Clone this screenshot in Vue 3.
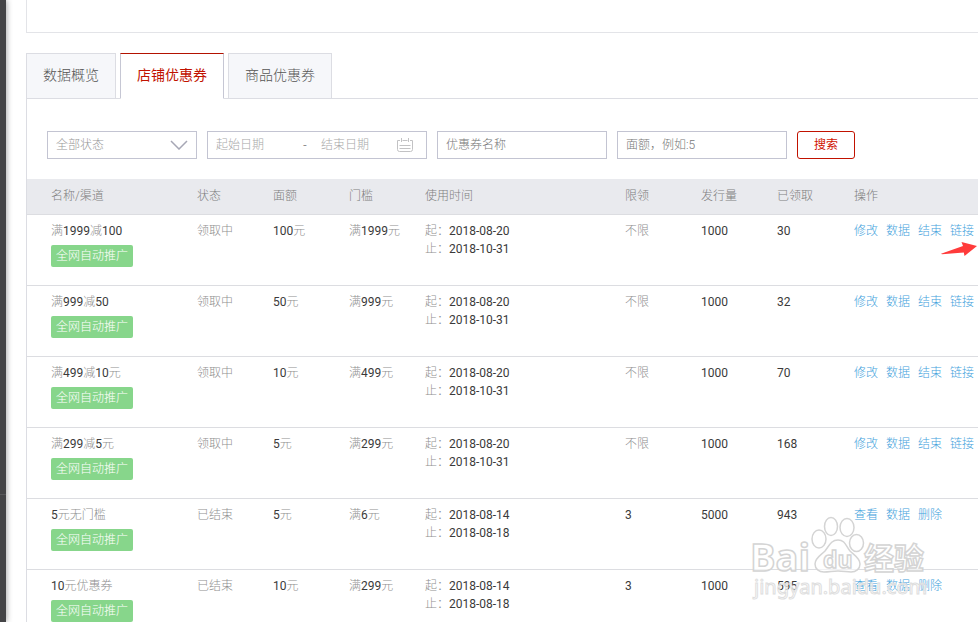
<script setup>
import { ref } from 'vue'

const tabs = ['数据概览', '店铺优惠券', '商品优惠券']
const activeTab = ref('店铺优惠券')

const columns = [
  { key: 'name', label: '名称/渠道' },
  { key: 'state', label: '状态' },
  { key: 'amount', label: '面额' },
  { key: 'threshold', label: '门槛' },
  { key: 'period', label: '使用时间' },
  { key: 'limit', label: '限领' },
  { key: 'issued', label: '发行量' },
  { key: 'taken', label: '已领取' },
  { key: 'actions', label: '操作' },
]

const running = ['修改', '数据', '结束', '链接']
const ended = ['查看', '数据', '删除']

const coupons = [
  { name: '满1999减100', state: '领取中', amount: '100元', threshold: '满1999元', from: '2018-08-20', to: '2018-10-31', limit: '不限', issued: '1000', taken: '30', actions: running },
  { name: '满999减50', state: '领取中', amount: '50元', threshold: '满999元', from: '2018-08-20', to: '2018-10-31', limit: '不限', issued: '1000', taken: '32', actions: running },
  { name: '满499减10元', state: '领取中', amount: '10元', threshold: '满499元', from: '2018-08-20', to: '2018-10-31', limit: '不限', issued: '1000', taken: '70', actions: running },
  { name: '满299减5元', state: '领取中', amount: '5元', threshold: '满299元', from: '2018-08-20', to: '2018-10-31', limit: '不限', issued: '1000', taken: '168', actions: running },
  { name: '5元无门槛', state: '已结束', amount: '5元', threshold: '满6元', from: '2018-08-14', to: '2018-08-18', limit: '3', issued: '5000', taken: '943', actions: ended },
  { name: '10元优惠券', state: '已结束', amount: '10元', threshold: '满299元', from: '2018-08-14', to: '2018-08-18', limit: '3', issued: '1000', taken: '595', actions: ended },
]

// Splits a value into digit runs and Chinese runs, which carry different tones.
const parts = (text) =>
  text.match(/\d+|\D+/g).map((value) => ({ value, digits: /\d/.test(value) }))
</script>

<template>
  <div class="page">
    <aside class="rail"><div class="rail-line"></div></aside>
    <main class="content">
      <section class="summary"></section>

      <nav class="tabs">
        <button
          v-for="tab in tabs"
          :key="tab"
          type="button"
          class="tab"
          :class="{ active: tab === activeTab }"
          @click="activeTab = tab"
        >{{ tab }}</button>
      </nav>

      <section class="panel">
        <form class="filters" @submit.prevent>
          <div class="field state-field">
            <select class="control" aria-label="全部状态">
              <option>全部状态</option>
            </select>
            <svg class="chevron" viewBox="0 0 18 10" width="18" height="10">
              <path d="M1 1l8 8 8-8" fill="none" stroke="#a6a7b5" stroke-width="1.5" />
            </svg>
          </div>
          <div class="field dates">
            <input class="control pale" type="text" placeholder="起始日期" aria-label="起始日期" />
            <span class="dash">-</span>
            <input class="control pale end" type="text" placeholder="结束日期" aria-label="结束日期" />
            <svg class="calendar" viewBox="0 0 16 16" width="16" height="16">
              <path
                d="M3 3.5H.5v9q0 2 2 2h11q2 0 2-2v-9H13M5.500 3.500h5M4.500 1v4M11.500 1v4M2.500 8.500h11M2.500 11.500h11"
                fill="none" stroke="#c2c2c4" stroke-width="1"
              />
            </svg>
          </div>
          <div class="field text-field">
            <input class="control" type="text" placeholder="优惠券名称" aria-label="优惠券名称" />
          </div>
          <div class="field text-field">
            <input class="control" type="text" placeholder="面额，例如:5" aria-label="面额" />
          </div>
          <button type="submit" class="search">搜索</button>
        </form>

        <table class="coupons">
          <colgroup>
            <col v-for="c in columns" :key="c.key" :class="'col-' + c.key" />
          </colgroup>
          <thead>
            <tr>
              <th v-for="c in columns" :key="c.key" scope="col">{{ c.label }}</th>
            </tr>
          </thead>
          <tbody>
            <tr v-for="(row, r) in coupons" :key="r">
              <td>
                <div class="name">
                  <span v-for="(p, i) in parts(row.name)" :key="i" :class="{ digits: p.digits }">{{ p.value }}</span>
                </div>
                <span class="badge">全网自动推广</span>
              </td>
              <td>{{ row.state }}</td>
              <td>
                <span v-for="(p, i) in parts(row.amount)" :key="i" :class="{ digits: p.digits }">{{ p.value }}</span>
              </td>
              <td>
                <span v-for="(p, i) in parts(row.threshold)" :key="i" :class="{ digits: p.digits }">{{ p.value }}</span>
              </td>
              <td>
                <div>起：<span class="digits">{{ row.from }}</span></div>
                <div>止：<span class="digits">{{ row.to }}</span></div>
              </td>
              <td>
                <span v-for="(p, i) in parts(row.limit)" :key="i" :class="{ digits: p.digits }">{{ p.value }}</span>
              </td>
              <td><span class="digits">{{ row.issued }}</span></td>
              <td><span class="digits">{{ row.taken }}</span></td>
              <td>
                <div class="actions">
                  <a v-for="a in row.actions" :key="a" href="#">{{ a }}</a>
                </div>
                <svg v-if="r === 0" class="pointer" viewBox="0 0 36 14" width="36" height="14">
                  <path d="M0 11.700L22 4 20.500 0 36 4 23.500 14 22.800 10.500 1 12.200z" fill="#ff3b3b" />
                </svg>
              </td>
            </tr>
          </tbody>
        </table>
      </section>
    </main>

    <svg class="watermark" viewBox="0 0 180 88" width="180" height="88">
      <g class="mark">
        <ellipse cx="69" cy="25" rx="7" ry="9" />
        <ellipse cx="81" cy="12.500" rx="6.500" ry="9" />
        <ellipse cx="97" cy="13.500" rx="7" ry="9" />
        <ellipse cx="106.500" cy="29" rx="7" ry="8.500" />
        <path d="M88 26c-7 0-9 6-13 11-4 4-10 7-10 13 0 5 4 8 9 8 5 0 9-1 14-1s9 1 13 1c5 0 9-3 9-8 0-6-6-9-10-13-4-5-5-11-12-11z" />
        <text class="latin" x="0" y="57" font-size="38">Bai</text>
        <text class="latin" x="73" y="54" font-size="23">du</text>
        <text class="han" x="114" y="55" font-size="30">经验</text>
        <text class="url" x="4" y="80" font-size="20">jingyan.baidu.com</text>
      </g>
    </svg>
  </div>
</template>

<style>
body {
  margin: 0;
  background: #fff;
}
</style>

<style scoped>
.page {
  position: relative;
  display: flex;
  height: 100vh;
  overflow: hidden;
  font-family: Roboto, "Noto Sans CJK SC", sans-serif;
  font-size: 12px;
  line-height: 18px;
  color: #8f8f8f;
}
.page * {
  box-sizing: border-box;
}
.rail {
  flex: none;
  width: 6px;
  background: #444446;
  box-shadow: 0 0 6px rgba(0, 0, 0, 0.45);
}
.rail-line {
  height: 495px;
  border-bottom: 1px solid #58585a;
}
.content {
  flex: 1;
  min-width: 0;
  padding-left: 20px;
}
.summary {
  height: 33px;
  border-left: 1px solid #e3e4e8;
  border-bottom: 1px solid #e3e4e8;
}
.tabs {
  position: relative;
  display: flex;
  gap: 4px;
  margin-top: 20px;
  margin-bottom: -1px;
}
.tab {
  height: 46px;
  padding: 0 16px 2px;
  border: 1px solid #dcdde3;
  background: #f6f7fa;
  color: #555;
  font: 300 14px/20px Roboto, "Noto Sans CJK SC", sans-serif;
}
.tab.active {
  border-color: #b31200 #c6c7d4 #fff;
  background: #fff;
  color: #c11200;
  font-weight: 400;
}
.panel {
  padding-top: 32px;
  border-top: 1px solid #dcdde3;
  border-left: 1px solid #dcdde3;
}
.filters {
  display: flex;
  gap: 10px;
  padding-left: 20px;
  margin-bottom: 20px;
}
.field {
  position: relative;
  display: flex;
  align-items: center;
  height: 28px;
  border: 1px solid #c3c4d2;
  background: #fff;
}
.state-field {
  width: 150px;
}
.dates {
  width: 220px;
  padding-right: 13px;
}
.text-field {
  width: 170px;
}
.control {
  flex: 1;
  min-width: 0;
  width: 100%;
  height: 26px;
  padding: 0 8px;
  border: 0;
  outline: 0;
  appearance: none;
  background: transparent;
  color: #999;
  font: 300 12px/18px Roboto, "Noto Sans CJK SC", sans-serif;
}
.control::placeholder {
  color: #777;
  opacity: 1;
}
.control.pale::placeholder {
  color: #a8a8a8;
}
.control.end {
  flex: none;
  width: 84px;
}
.dash {
  width: 16px;
  text-align: center;
}
.chevron {
  position: absolute;
  right: 8px;
  pointer-events: none;
}
.calendar {
  flex: none;
}
.search {
  width: 58px;
  height: 28px;
  padding: 0;
  border: 1px solid #c11200;
  border-radius: 3px;
  background: #fff;
  color: #d01200;
  font: 400 12px/18px Roboto, "Noto Sans CJK SC", sans-serif;
}
.coupons {
  width: 100%;
  table-layout: fixed;
  border-collapse: separate;
  border-spacing: 0;
}
.col-name {
  width: 146px;
}
.col-state,
.col-amount,
.col-threshold,
.col-limit,
.col-issued {
  width: 76px;
}
.col-taken {
  width: 77px;
}
.col-period {
  width: 200px;
}
th,
td {
  padding: 0 0 0 24px;
  border-bottom: 1px solid #dcdde1;
  text-align: left;
  white-space: nowrap;
  font-weight: 300;
}
th {
  height: 36px;
  padding-bottom: 2px;
  background: #e9eaee;
  color: #808080;
}
td {
  position: relative;
  height: 71px;
  padding-top: 7px;
  vertical-align: top;
}
.digits {
  color: #3a3a3a;
  font-weight: 400;
}
.name {
  margin-bottom: 5px;
}
.badge {
  display: block;
  width: max-content;
  padding: 2px 5px;
  border-radius: 2px;
  background: #87d68b;
  color: #fff;
  font-weight: 300;
}
.actions {
  display: flex;
  gap: 8px;
}
.actions a {
  color: #3fa2dc;
  text-decoration: none;
}
.pointer {
  position: absolute;
  top: 27px;
  right: 1px;
}
.watermark {
  position: absolute;
  right: 48px;
  bottom: 20px;
  pointer-events: none;
}
.mark {
  fill: #fff;
  fill-opacity: 0.6;
  stroke: #d4d4d4;
  stroke-width: 1.5;
}
.latin {
  font-family: "Open Sans", sans-serif;
  font-weight: 700;
}
.han {
  font-family: "Noto Sans CJK SC", sans-serif;
  font-weight: 700;
}
.url {
  font-family: "Noto Sans", sans-serif;
  stroke-width: 1;
  stroke: #dedede;
}
</style>
